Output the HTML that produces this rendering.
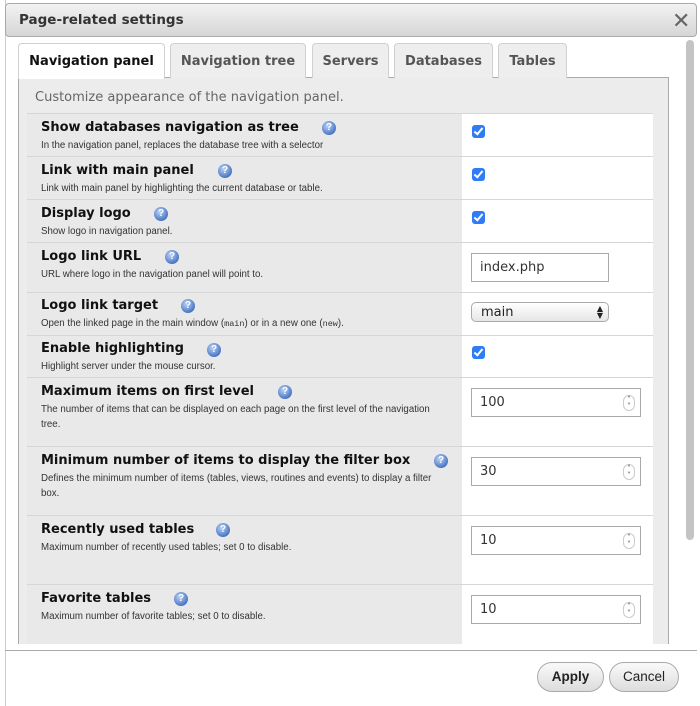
<!DOCTYPE html>
<html><head><style>
*{box-sizing:border-box;margin:0;padding:0}
body{width:700px;height:706px;background:#fff;position:relative;overflow:hidden;font-family:"DejaVu Sans",Verdana,sans-serif}
.abs{position:absolute}
#dlg{left:5px;top:0;width:693px;height:706px;background:#fff;border-left:1px solid #ccc}
#title{left:5px;top:3px;width:692px;height:34px;border:1px solid #aaa;border-radius:4px;background:linear-gradient(#f2f2f2,#d6d6d6);font-weight:bold;font-size:13.5px;color:#333;padding:8px 0 0 13px}
#close{left:672px;top:9px;font-size:22px;color:#666;font-family:"DejaVu Sans",sans-serif;font-weight:normal}
.tab{top:43px;height:35px;border:1px solid #d0d0d0;border-bottom:none;border-radius:4px 4px 0 0;background:#eee;font-weight:bold;font-size:13px;color:#555;text-align:center;padding-top:10px}
.tab.act{background:#fff;color:#111;height:36px;z-index:2}
#panel{left:18px;top:77px;width:651px;height:567px;border:1px solid #aaa;border-bottom:none;background:#ececec}
#intro{left:35px;top:90px;font-size:13px;color:#666}
#tbl{left:27px;top:113px;width:626px;height:531px;background:#e9e9e9}
#rcol{left:462px;top:113px;width:191px;height:531px;background:#fff}
.row{left:27px;width:626px;border-top:1px solid #d6d6d6;height:1px}
.t{left:41px;font-weight:bold;font-size:13px;color:#111;white-space:nowrap;margin-top:1px}
.d{left:41px;font-family:"Liberation Sans",Arial,sans-serif;font-size:9.7px;color:#333;line-height:15px;width:405px;margin-top:1px}
.h{width:14px;height:14px;border-radius:50%;background:radial-gradient(circle at 40% 35%,#bcd3f5,#4a77c4 70%,#2e5aa5);color:#fff;font-size:10px;font-weight:bold;text-align:center;line-height:14px;font-family:"Liberation Sans",sans-serif}
.cb{left:472px;width:13px;height:13px;border-radius:3px;background:#2f7cf6}
.cb:after{content:"";position:absolute;left:4px;top:1px;width:3px;height:7px;border:solid #fff;border-width:0 2px 2px 0;transform:rotate(40deg)}
.in{border:1px solid #aaa;background:#fff;font-size:13px;color:#333;padding:6px 0 0 8px;height:29px;font-family:"DejaVu Sans",sans-serif}
.sp{position:absolute;right:5px;top:6px;width:12px;height:16px;border:1px solid #ccc;border-radius:6px;font-size:8px;line-height:7px;text-align:center;color:#555}
#scroll{left:686px;top:40px;width:8px;height:500px;background:#c4c4c4;border-radius:4px}
#foot{left:5px;top:650px;width:692px;border-top:1px solid #aaa}
.btn{top:662px;height:30px;border:1px solid #aaa;border-radius:15px;background:linear-gradient(#fafafa,#dcdcdc);font-size:13.5px;text-align:center;padding-top:6px;font-family:"Liberation Sans",Arial,sans-serif;color:#222}
</style></head><body>
<div id="dlg" class="abs"></div>
<div id="title" class="abs">Page-related settings</div>
<div id="close" class="abs">✕</div>
<div id="scroll" class="abs"></div>
<div id="panel" class="abs"></div>
<div class="tab act abs" style="left:18px;width:147px">Navigation panel</div>
<div class="tab abs" style="left:170px;width:136px">Navigation tree</div>
<div class="tab abs" style="left:312px;width:77px">Servers</div>
<div class="tab abs" style="left:394px;width:99px">Databases</div>
<div class="tab abs" style="left:498px;width:69px">Tables</div>
<div id="intro" class="abs">Customize appearance of the navigation panel.</div>
<div id="tbl" class="abs"></div>
<div id="rcol" class="abs"></div>

<div class="row abs" style="top:113px"></div>
<div class="t abs" style="top:119px">Show databases navigation as tree</div>
<div class="h abs" style="left:322px;top:121px">?</div>
<div class="d abs" style="top:137px">In the navigation panel, replaces the database tree with a selector</div>
<div class="cb abs" style="top:125px"></div>

<div class="row abs" style="top:156px"></div>
<div class="t abs" style="top:162px">Link with main panel</div>
<div class="h abs" style="left:218px;top:164px">?</div>
<div class="d abs" style="top:180px">Link with main panel by highlighting the current database or table.</div>
<div class="cb abs" style="top:168px"></div>

<div class="row abs" style="top:199px"></div>
<div class="t abs" style="top:205px">Display logo</div>
<div class="h abs" style="left:154px;top:207px">?</div>
<div class="d abs" style="top:223px">Show logo in navigation panel.</div>
<div class="cb abs" style="top:211px"></div>

<div class="row abs" style="top:242px"></div>
<div class="t abs" style="top:248px">Logo link URL</div>
<div class="h abs" style="left:165px;top:250px">?</div>
<div class="d abs" style="top:266px">URL where logo in the navigation panel will point to.</div>
<div class="in abs" style="left:471px;top:253px;width:138px">index.php</div>

<div class="row abs" style="top:292px"></div>
<div class="t abs" style="top:297px">Logo link target</div>
<div class="h abs" style="left:181px;top:299px">?</div>
<div class="d abs" style="top:315px">Open the linked page in the main window (<span style="font-family:'Liberation Mono',monospace;font-size:8.5px">main</span>) or in a new one (<span style="font-family:'Liberation Mono',monospace;font-size:8.5px">new</span>).</div>
<div class="abs" style="left:471px;top:302px;width:138px;height:20px;border:1px solid #aaa;border-radius:5px;background:linear-gradient(#fff,#e6e6e6);font-size:13px;padding:2px 0 0 9px;color:#222">main<span style="position:absolute;right:5px;top:2px;font-size:8px;line-height:7px">▲<br>▼</span></div>

<div class="row abs" style="top:335px"></div>
<div class="t abs" style="top:340px">Enable highlighting</div>
<div class="h abs" style="left:207px;top:343px">?</div>
<div class="d abs" style="top:358px">Highlight server under the mouse cursor.</div>
<div class="cb abs" style="top:346px"></div>

<div class="row abs" style="top:377px"></div>
<div class="t abs" style="top:383px">Maximum items on first level</div>
<div class="h abs" style="left:278px;top:385px">?</div>
<div class="d abs" style="top:401px">The number of items that can be displayed on each page on the first level of the navigation tree.</div>
<div class="in abs" style="left:471px;top:388px;width:170px">100<div class="sp">˄<br>˅</div></div>

<div class="row abs" style="top:446px"></div>
<div class="t abs" style="top:452px">Minimum number of items to display the filter box</div>
<div class="h abs" style="left:434px;top:454px">?</div>
<div class="d abs" style="top:470px">Defines the minimum number of items (tables, views, routines and events) to display a filter box.</div>
<div class="in abs" style="left:471px;top:457px;width:170px">30<div class="sp">˄<br>˅</div></div>

<div class="row abs" style="top:515px"></div>
<div class="t abs" style="top:521px">Recently used tables</div>
<div class="h abs" style="left:216px;top:523px">?</div>
<div class="d abs" style="top:539px">Maximum number of recently used tables; set 0 to disable.</div>
<div class="in abs" style="left:471px;top:526px;width:170px">10<div class="sp">˄<br>˅</div></div>

<div class="row abs" style="top:584px"></div>
<div class="t abs" style="top:590px">Favorite tables</div>
<div class="h abs" style="left:174px;top:592px">?</div>
<div class="d abs" style="top:608px">Maximum number of favorite tables; set 0 to disable.</div>
<div class="in abs" style="left:471px;top:595px;width:170px">10<div class="sp">˄<br>˅</div></div>

<div id="foot" class="abs"></div>
<div class="btn abs" style="left:537px;width:67px;font-weight:bold">Apply</div>
<div class="btn abs" style="left:609px;width:70px">Cancel</div>
</body></html>
